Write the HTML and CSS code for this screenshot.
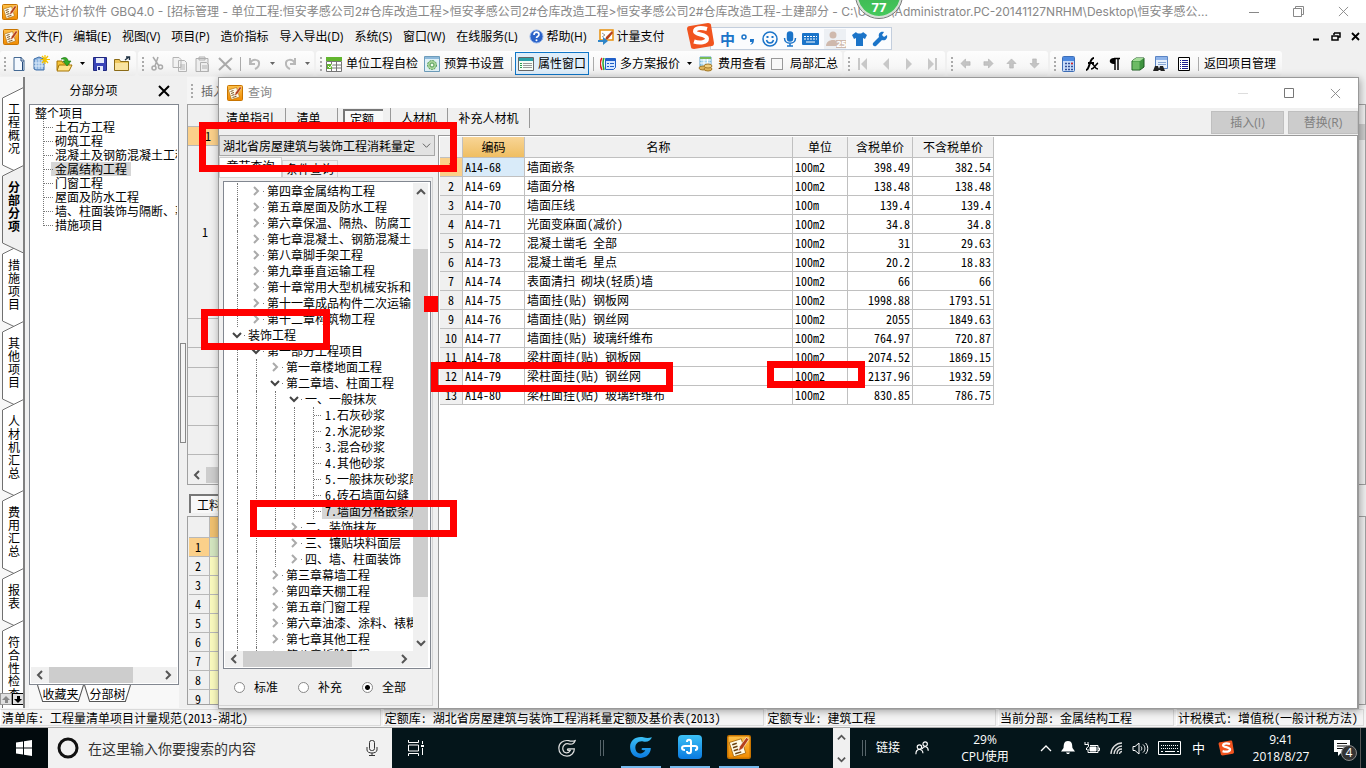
FILE: index.html
```html
<!DOCTYPE html>
<html lang="zh-CN">
<head>
<meta charset="utf-8">
<title>广联达计价软件 GBQ4.0</title>
<link rel="stylesheet" href="styles.css">
</head>
<body>
<svg class="defs" aria-hidden="true">
  <defs>
    <linearGradient id="gold" x1="0" y1="0" x2="0" y2="1"><stop offset="0" stop-color="#ffc24a"/><stop offset="1" stop-color="#f08a00"/></linearGradient>
    <linearGradient id="blueg" x1="0" y1="0" x2="0" y2="1"><stop offset="0" stop-color="#3cc0f5"/><stop offset="1" stop-color="#0a7ae0"/></linearGradient>
  </defs>
  <symbol id="app" viewBox="0 0 16 16"><rect x=".5" y=".5" width="15" height="15" rx="1" fill="url(#gold)" stroke="#c87400"/><path d="M1.500 5l8-2.500L12.500 12l-8 2.500z" fill="#fffbe8" stroke="#a86a10" stroke-width=".6"/><path d="M3.500 6.500l3-1M4 8.500l3-1M4.500 10.500l3-1M5.500 12.500l4-1.200" stroke="#6a4010" stroke-width=".9"/><path d="M13 1.500L8.500 7.500l-1 3.500 3-2L14.500 3z" fill="#b5401c" stroke="#fff" stroke-width=".4"/></symbol>
  <symbol id="right" viewBox="0 0 10 10"><path d="M3 1l4 4-4 4" fill="none" stroke="currentColor" stroke-width="2"/></symbol>
  <symbol id="left" viewBox="0 0 10 10"><path d="M7 1L3 5l4 4" fill="none" stroke="currentColor" stroke-width="2"/></symbol>
  <symbol id="down" viewBox="0 0 10 10"><path d="M1 3l4 4 4-4" fill="none" stroke="currentColor" stroke-width="2"/></symbol>
  <symbol id="up" viewBox="0 0 10 10"><path d="M1 7l4-4 4 4" fill="none" stroke="currentColor" stroke-width="2"/></symbol>
  <symbol id="close" viewBox="0 0 12 12"><path d="M1 1l10 10M11 1L1 11" fill="none" stroke="currentColor"/></symbol>
  <symbol id="arrow" viewBox="0 0 12 12"><path d="M1 6l5-5v3h5v4H6v3z" fill="#c4c4c4" stroke="#aaa" stroke-width=".6"/></symbol>
  <symbol id="caret" viewBox="0 0 5 3"><path d="M0 0h5L2.500 3z" fill="currentColor"/></symbol>
  <symbol id="gicon" viewBox="0 0 22 22"><path d="M21 2c-3 1-5 1-8 0C6 1 1 5 1 11c0 6 4 10 10 10 5 0 9-4 9-9h-7c-2 0-2 2 0 2h2c-2 4-8 4-9-1-1-5 3-8 7-7 4 1 7-1 8-4z"/></symbol>
  <symbol id="sogou" viewBox="0 0 28 28"><path d="M4 4L22 1c2 0 3 1 3 2l3 18c0 2-1 3-2 3L8 27c-2 0-3-1-3-2L1 7c0-2 1-3 3-3z" fill="#f1541f"/><path d="M21 7c-7-2-12-1-12 2.500s12 2.500 12 7c0 4-7 5-13 3" fill="none" stroke="#fff" stroke-width="4"/></symbol>
</svg>

<div class="app">
  <header class="titlebar">
    <svg class="i16"><use href="#app"/></svg>
    <span class="title-text">广联达计价软件 GBQ4.0 - [招标管理 - 单位工程:恒安孝感公司2#仓库改造工程&gt;恒安孝感公司2#仓库改造工程&gt;恒安孝感公司2#仓库改造工程-土建部分 - C:\Users\Administrator.PC-20141127NRHM\Desktop\恒安孝感公...</span>
    <button class="winbtn" aria-label="最小化"><svg width="10" height="10"><path d="M0 5.500h10" stroke="#888"/></svg></button>
    <button class="winbtn" aria-label="还原"><svg width="11" height="11"><path d="M.5 2.500h8v8h-8zM2.500 2V.5h8v8H9" fill="none" stroke="#888"/></svg></button>
    <button class="winbtn" aria-label="关闭"><svg width="11" height="11"><use href="#close"/></svg></button>
  </header>

  <nav class="menubar">
    <svg class="i16"><use href="#app"/></svg>
    <button>文件(F)</button><button>编辑(E)</button><button>视图(V)</button><button>项目(P)</button><button>造价指标</button><button>导入导出(D)</button><button>系统(S)</button><button>窗口(W)</button><button>在线服务(L)</button>
    <button><svg width="15" height="15" viewBox="0 0 15 15"><circle cx="7.500" cy="7.500" r="6.500" fill="#2a62c8" stroke="#8fb0e8"/><path d="M5 6c0-4 5-3.500 5-.5C10 7.500 7.500 7.500 7.500 9" fill="none" stroke="#fff" stroke-width="1.600"/><circle cx="7.500" cy="11.300" r="1" fill="#fff"/></svg>帮助(H)</button>
    <button><svg width="16" height="16" viewBox="0 0 16 16"><path d="M2 1h13v10H2z" fill="#fff" stroke="#e8900c" stroke-width="1.500"/><path d="M4 4l3 2-3 2" fill="none" stroke="#999"/><path d="M14 2L8 8l-1 3 3-1 5-6z" fill="#b5401c"/><path d="M0 11h5V8l5 4-5 4v-3H0z" fill="#2f86c8"/></svg>计量支付</button>
    <span class="mdi"><button aria-label="最小化子窗口"><svg width="9" height="9"><path d="M1 7.500h6" stroke="#000" stroke-width="2"/></svg></button><button aria-label="还原子窗口"><svg width="10" height="9"><path d="M3 1h6v4H7M3 1v2M1 4h6v4H1z" fill="none" stroke="#000" stroke-width="1.500"/></svg></button><button aria-label="关闭子窗口"><svg width="9" height="9" viewBox="0 0 9 9"><path d="M1 1l7 7M8 1L1 8" stroke="#000" stroke-width="1.800"/></svg></button></span>
  </nav>

  <div class="toolbar">
    <div class="group"><i class="grip"></i>
      <button class="slot" aria-label="新建"><svg width="16" height="16"><path d="M3 1.500h7l3 3v10H3z" fill="#f4f9ff" stroke="#456a94"/><path d="M10 1v4h3M11.500 6v8" fill="none" stroke="#24487a"/></svg></button>
      <button class="slot" aria-label="新建项目"><svg width="17" height="17"><path d="M1 4l5-2 5 2v11H3l-2-1z" fill="#8db4df" stroke="#3e6ea8"/><path d="M3 5v9M6 4v10M9 5v9M1 8h10M1 11h10" stroke="#dcebfa"/><path d="M12 0v9M8 4.500h9M9 1l6 7M15 1L9 8" stroke="#f3c200" stroke-width="1.200"/></svg></button>
      <button class="slot" aria-label="打开"><svg width="17" height="16"><path d="M1 5h5l1 2h6v7H1z" fill="#f5c236" stroke="#a67405"/><path d="M3 9h13l-3 6H1z" fill="#ffe48a" stroke="#a67405"/><path d="M5 3c4-3 7-1 7 2h3l-4 5-4-5h2c0-2-2-2-4-2z" fill="#35ad25" stroke="#176d0d" stroke-width=".6"/></svg></button>
      <span class="dd"><svg width="5" height="3"><use href="#caret"/></svg></span>
      <button class="slot" aria-label="保存"><svg width="14" height="14"><path d="M.5.5h13v13H.5z" fill="#3a44b8" stroke="#20287e"/><path d="M3 1h8v5H3zM4 9h6v5H4z" fill="#e6ebfb"/><path d="M5 10h2v3H5z" fill="#20287e"/></svg></button>
      <button class="slot" aria-label="打开目录"><svg width="17" height="16"><path d="M.5 3.500h5l1 2h8v9H.5z" fill="#eec75e" stroke="#8a6a16"/><path d="M1 7h13v7H1z" fill="#f9e3a0"/><path d="M11 4l4-3M12 1h3.500v3" fill="none" stroke="#234" stroke-width="1.400"/></svg></button>
    </div>
    <div class="group dim"><i class="grip"></i>
      <button class="slot" aria-label="剪切"><svg width="14" height="15" fill="none" stroke="#aaa" stroke-width="1.500"><path d="M3 1l6 9M8 1L5 10"/><circle cx="4" cy="12" r="2"/><circle cx="10.500" cy="11" r="2"/></svg></button>
      <button class="slot" aria-label="复制"><svg width="16" height="16" fill="#f2f2f2" stroke="#b4b4b4"><path d="M1 1.500h6l2 2v8H1zM6.500 4.500h6l2 2v9h-8zM8 9h5M8 11h5M8 13h5"/></svg></button>
      <button class="slot" aria-label="粘贴"><svg width="15" height="16" fill="#eee" stroke="#b0b0b0"><path d="M1 2.500h12v13H1zM4 1h6v3H4zM5.500 6.500h6l2 2v7h-8zM7 10h5M7 12h5"/></svg></button>
      <button class="slot" aria-label="删除"><svg width="15" height="14"><path d="M1 1l12 12M14 1L1 13" stroke="#aaa" stroke-width="2"/></svg></button>
      <i class="sep6"></i>
      <button class="slot" aria-label="撤销"><svg width="14" height="13" fill="none" stroke="#b8b8b8" stroke-width="2"><path d="M2 1v6h5M2 7c2-6 10-5 9 0 0 2-2 4-4 5"/></svg></button>
      <span class="dd"><svg width="5" height="3"><use href="#caret"/></svg></span>
      <button class="slot" aria-label="重做"><svg width="14" height="13" fill="none" stroke="#b8b8b8" stroke-width="2"><path d="M12 1v6H7M12 7C10 1 2 2 3 7c0 2 2 4 4 5"/></svg></button>
      <span class="dd"><svg width="5" height="3"><use href="#caret"/></svg></span>
    </div>
    <div class="group wide"><i class="grip"></i>
      <button class="tb"><svg class="i16"><path d="M0 1h16v4H0z" fill="#62b52e"/><path d="M.5 5.500h15v10H.5zM5.500 6v9M10.500 6v9M0 9h16M0 12h16" fill="#fff" stroke="#777"/><path d="M1 8h5v5H1z" fill="#62b52e"/><path d="M2 10l2 2 3-5" fill="none" stroke="#fff"/></svg>单位工程自检</button>
      <button class="tb"><svg class="i16"><path d="M.5.5h15v15H.5z" fill="#dff0f5" stroke="#6d9cbb"/><path d="M1 2h14" stroke="#8db9db" stroke-width="2"/><circle cx="8" cy="9" r="4.500" fill="#a8d49a" stroke="#4f9a55" stroke-dasharray="2 1"/><circle cx="8" cy="9" r="2" fill="#f4fff0" stroke="#4f9a55"/></svg>预算书设置</button>
      <i class="sep8"></i>
      <button class="tb pressed"><svg class="i16"><path d="M.5 1.500h15v13H.5z" fill="#f6fff6" stroke="#666"/><path d="M1 2h14v3H1z" fill="#29a0a8"/><path d="M2 7.500h2M2 9.500h2M2 11.500h2" stroke="#27a04a"/><path d="M5 7.500h9M5 9.500h9M5 11.500h9" stroke="#999"/></svg>属性窗口</button>
      <i class="sep8"></i>
      <button class="tb"><svg class="i16"><path d="M2 2C0 5 0 10 2 14" fill="none" stroke="#e02020" stroke-width="1.500"/><path d="M4 2C2 6 3 10 4 14" fill="none" stroke="#28a428" stroke-width="1.500"/><path d="M5.500 2.500h10v9l-2 2h-8z" fill="#d7e8ff" stroke="#1f5fc8"/><path d="M5 4h10" stroke="#1f5fc8" stroke-width="2"/><path d="M7 7.500h2M10 7.500h4M7 10.500h2M10 10.500h4" stroke="#1f5fc8"/></svg>多方案报价</button>
      <span class="dd"><svg width="5" height="3"><use href="#caret"/></svg></span>
      <button class="tb"><svg class="i16"><path d="M2 1h11v10H2z" fill="#a5d5ee" stroke="#5a9cc4"/><path d="M2 4h11M2 7h11M6 1v10M9.500 1v10" stroke="#fff"/><path d="M2 1h11v2H2z" fill="#77bb55"/><ellipse cx="5" cy="12" rx="4" ry="2" fill="#dfb45a" stroke="#a47a2a"/><ellipse cx="10" cy="13" rx="4" ry="2" fill="#dfb45a" stroke="#a47a2a"/><ellipse cx="10" cy="10" rx="4" ry="2" fill="#f0cf80" stroke="#a47a2a"/></svg>费用查看</button>
      <label class="check"><input type="checkbox">局部汇总</label>
    </div>
    <div class="group"><i class="grip"></i>
      <button class="slot" aria-label="第一条"><svg width="10" height="14" fill="#c8c8c8"><path d="M0 1h2v12H0zM9 1v12L3 7z"/></svg></button>
      <button class="slot" aria-label="上一条"><svg width="8" height="14" fill="#c8c8c8"><path d="M7 1v12L1 7z"/></svg></button>
      <button class="slot" aria-label="下一条"><svg width="8" height="14" fill="#c8c8c8"><path d="M1 1v12l6-6z"/></svg></button>
      <button class="slot" aria-label="最后一条"><svg width="10" height="14" fill="#c8c8c8"><path d="M8 1h2v12H8zM1 1v12l6-6z"/></svg></button>
    </div>
    <div class="group"><i class="grip"></i>
      <button class="slot" aria-label="左移"><svg width="11" height="11"><use href="#arrow"/></svg></button>
      <button class="slot" aria-label="右移"><svg class="r180" width="11" height="11"><use href="#arrow"/></svg></button>
      <button class="slot" aria-label="上移"><svg class="r90" width="11" height="11"><use href="#arrow"/></svg></button>
      <button class="slot" aria-label="下移"><svg class="r270" width="11" height="11"><use href="#arrow"/></svg></button>
    </div>
    <div class="group last"><i class="grip"></i>
      <button class="slot" aria-label="计算器"><svg width="13" height="16"><rect x=".5" y=".5" width="12" height="15" rx="1" fill="#c9dcf8" stroke="#3e6fb8"/><path d="M1 1h11v4H1z" fill="#4e8ae0"/><path d="M3 7.500h8M3 10.500h8M3 13.500h8" stroke="#334f9a" stroke-width="1.500" stroke-dasharray="2 1"/><path d="M9 7.500h2" stroke="#d22" stroke-width="1.500"/></svg></button>
      <button class="slot" aria-label="函数"><svg width="14" height="14" fill="none" stroke="#000"><path d="M1 13c4 0 3-12 8-12M3 6h6" stroke-width="2"/><path d="M7 7c3 0 2 5 6 5M13 6c-2 1-4 6-7 6" stroke-width="1.500"/></svg></button>
      <button class="slot" aria-label="段落"><svg width="12" height="14"><path d="M11 1.500H5M6 1v12M9 1v12" stroke="#000" stroke-width="1.500" fill="none"/><path d="M6 1C-1 0-1 8 6 7z"/></svg></button>
      <button class="slot" aria-label="模型"><svg width="14" height="14"><path d="M1 4l4-3h8v9l-4 3H1z" fill="#3f9440" stroke="#1d5a20"/><path d="M1 4l4-3h8L9 4z" fill="#a5dc9a"/><path d="M1.500 4.500h7v8h-7z" fill="#6dbb65"/></svg></button>
      <button class="slot" aria-label="查找"><svg width="15" height="16"><path d="M2.500.5h12v12h-12z" fill="#e8f1fc" stroke="#5a84c4"/><path d="M3 1h11v3H3z" fill="#8fb4ea"/><path d="M5 6.500h8M5 8.500h8" stroke="#8aa9d6"/><path d="M0 15l2-5h3l1 3 1-3h3l2 5H8l-1-1H6l-1 1z" fill="#222"/></svg></button>
      <button class="slot" aria-label="列表"><svg width="12" height="14"><path d="M.5.500h11v13H.5z" fill="#fff" stroke="#000"/><path d="M2 3.500h1M2 5.500h1M2 7.500h1M2 9.500h1M2 11.500h1M4 3.500h6M4 5.500h6M4 7.500h6M4 9.500h6M4 11.500h6" stroke="#1c1c90"/></svg></button>
      <i class="sep6"></i>
      <button class="back">返回项目管理</button>
    </div>
  </div>

  <main class="workspace">
    <div class="sidetabs">
      <button class="vtab"><svg viewBox="0 0 24 88" preserveAspectRatio="none"><path d="M23.500.5L2.500 11v67l21 10"/></svg><span>工程概况</span></button>
      <button class="vtab on"><svg viewBox="0 0 24 88" preserveAspectRatio="none"><path d="M23.500.5L2.500 11v67l21 10"/></svg><span>分部分项</span></button>
      <button class="vtab"><svg viewBox="0 0 24 88" preserveAspectRatio="none"><path d="M23.500.5L2.500 11v67l21 10"/></svg><span>措施项目</span></button>
      <button class="vtab"><svg viewBox="0 0 24 88" preserveAspectRatio="none"><path d="M23.500.5L2.500 11v67l21 10"/></svg><span>其他项目</span></button>
      <button class="vtab"><svg viewBox="0 0 24 101" preserveAspectRatio="none"><path d="M23.500.5L2.500 11v80l21 10"/></svg><span>人材机汇总</span></button>
      <button class="vtab"><svg viewBox="0 0 24 88" preserveAspectRatio="none"><path d="M23.500.5L2.500 11v67l21 10"/></svg><span>费用汇总</span></button>
      <button class="vtab"><svg viewBox="0 0 24 62" preserveAspectRatio="none"><path d="M23.500.5L2.500 11v41l21 10"/></svg><span>报表</span></button>
      <button class="vtab"><svg viewBox="0 0 24 101" preserveAspectRatio="none"><path d="M23.500.5L2.500 11v80l21 10"/></svg><span>符合性检查</span></button>
      <div class="tabscroll"><button class="off" aria-label="向上"><svg width="9" height="9"><path d="M0 5l4-4 4 4H6v3H3V5z" fill="#888"/></svg></button><button aria-label="向下"><svg width="9" height="9"><path d="M0 4l4 4 4-4H6V1H3v3z"/></svg></button></div>
    </div>

    <aside class="panel">
      <div class="panel-head"><span>分部分项</span><button aria-label="关闭面板"><svg width="12" height="12" viewBox="0 0 12 12"><path d="M1 1l10 10M11 1L1 11" stroke="#000" stroke-width="2"/></svg></button></div>
      <div class="panel-box">
        <ul class="ptree">
          <li class="root">整个项目</li><li><span>土石方工程</span></li><li><span>砌筑工程</span></li><li><span>混凝土及钢筋混凝土工程</span></li><li><span class="sel">金属结构工程</span></li><li><span>门窗工程</span></li><li><span>屋面及防水工程</span></li><li><span>墙、柱面装饰与隔断、幕墙</span></li><li><span>措施项目</span></li>
        </ul>
        <div class="hscroll"><svg width="10" height="10"><use href="#left"/></svg><span class="track"><i class="thumb p-thumb"></i></span><svg width="10" height="10"><use href="#right"/></svg></div>
      </div>
      <div class="ptabs"><button><svg viewBox="0 0 46 16" preserveAspectRatio="none"><path d="M.5 0l5 15.500h35L45.500 0"/></svg>收藏夹</button><button><svg viewBox="0 0 46 16" preserveAspectRatio="none"><path d="M.5 0l5 15.500h35L45.500 0"/></svg>分部树</button></div>
    </aside>

    <div class="splitter"><i></i></div>

    <section class="under">
      <div class="under-tools"><i class="grip"></i>插入</div>
      <div class="grid-a">
        <div class="ga-main">
          <div class="ga-body"><div class="ga h21"></div><div class="ga h19 hot">1</div><div class="ga h173">1</div><div class="ga h29"></div><div class="ga h20"></div><div class="ga h29"></div><div class="ga h29"></div><div class="ga h29"></div></div>
          <div class="ga-scroll"><i class="thumb"></i></div>
        </div>
        <div class="hscroll"><svg width="10" height="10"><use href="#left"/></svg><span class="track"><i class="thumb half"></i></span></div>
      </div>
      <div class="grid-tab"><button>工料机显示</button></div>
      <div class="grid-b">
        <div class="gb head"><b></b><i></i></div><div class="gb hot"><b>1</b><i></i></div><div class="gb"><b>2</b><i></i></div><div class="gb"><b>3</b><i></i></div><div class="gb"><b>4</b><i></i></div><div class="gb"><b>5</b><i></i></div><div class="gb"><b>6</b><i></i></div><div class="gb"><b>7</b><i></i></div><div class="gb"><b>8</b><i></i></div><div class="gb"><b>9</b><i></i></div>
      </div>
    </section>
  </main>

  <footer class="status">
    <span class="s1">清单库: 工程量清单项目计量规范(2013-湖北)</span><span class="s2">定额库: 湖北省房屋建筑与装饰工程消耗量定额及基价表(2013)</span><span class="s3">定额专业: 建筑工程</span><span class="s4">当前分部: 金属结构工程</span><span class="s5">计税模式: 增值税(一般计税方法)</span>
  </footer>

  <div class="taskbar">
    <button class="start" aria-label="开始"><svg width="16" height="16" fill="#fff"><path d="M0 2.500l7-1v6H0zM8 1.300L16 0v7.500H8zM0 8.500h7v6l-7-1zM8 8.500h8V16l-8-1.200z"/></svg></button>
    <label class="search"><svg width="22" height="22"><circle cx="11" cy="11" r="9" fill="none" stroke="#111" stroke-width="3"/></svg><input type="text" placeholder="在这里输入你要搜索的内容" aria-label="搜索"><svg width="12" height="16" fill="none" stroke="#333"><rect x="3.500" y=".5" width="5" height="10" rx="2"/><path d="M1 7v3c0 4 10 4 10 0V7M6 13v2.500M3 15.500h6"/></svg></label>
    <div class="tasks">
      <button class="tk view" aria-label="任务视图"><svg width="18" height="16" fill="none" stroke="#fff"><path d="M1.500 0v2.500h10V0M1.500 5h10v6h-10zM1.500 16v-2.500h10V16M15.500 1v3M15.500 8v7"/><path d="M14 6h3" stroke-width="2"/></svg></button>
      <button class="tk glodon" aria-label="G"><svg width="18" height="18" fill="none" stroke="#ddd" stroke-width="1.500"><use href="#gicon"/></svg></button>
      <i class="bars"></i>
      <button class="tk run" aria-label="广联达"><svg width="24" height="24" fill="url(#blueg)"><use href="#gicon"/></svg></button>
      <button class="tk run" aria-label="加密锁"><svg width="24" height="24"><rect width="24" height="24" rx="4" fill="url(#blueg)"/><path d="M9 7c0-3 4-3 4 0v9c0 3-4 3-4 0M7 15c-4 0-4-4 0-4h10c3 0 3 4 0 4" fill="none" stroke="#fff" stroke-width="2"/></svg></button>
      <button class="tk run" aria-label="计价软件"><svg width="24" height="24"><use href="#app"/></svg></button>
    </div>
    <div class="tk-scroll"><svg width="9" height="9"><use href="#up"/></svg><svg width="9" height="9"><use href="#down"/></svg></div>
    <i class="bars b2"></i><span class="links">链接</span>
    <div class="tray">
      <svg width="15" height="16" viewBox="0 0 17 16" fill="none" stroke="#fff" stroke-width="1.300"><circle cx="5" cy="7" r="2.500"/><circle cx="11.500" cy="3.500" r="2.500"/><path d="M1 15c0-7 8-7 8-1M8 9c2-4 7-3 7 2"/></svg>
      <div class="two cpu"><span>29%</span><span>CPU使用</span></div>
      <button aria-label="显示隐藏的图标"><svg width="12" height="8" fill="none" stroke="#fff" stroke-width="1.300"><path d="M1 7l5-5 5 5"/></svg></button>
      <svg width="14" height="14" fill="#fff"><path d="M7 0c-5 0-4 5-4.500 7L0 10.500h14L11.500 7C11 5 12 0 7 0zM5 11.500h4L8 13H6z"/></svg>
      <svg width="17" height="14" fill="none" stroke="#fff"><path d="M6 4.500h8v7H4V8M14 7h1.500v2.500H14M1 1v2M4 1v2M.5 3.500h4v2l-2 1.500v2"/><path d="M6 6h6v4H6z" fill="#fff"/></svg>
      <svg width="13" height="13" viewBox="0 0 13 13" fill="none" stroke="#ddd"><path d="M1 12C1 6 6 1 12 1M4 12c0-4 4-8 8-8M7 12c0-3 2-5 5-5M9.500 12c0-1 1-2.500 2.500-2.500" stroke-width="1.300"/></svg>
      <svg width="17" height="13" viewBox="0 0 17 13" fill="none" stroke="#fff"><path d="M1 4.500h2L7 1v11L3 8.500H1zM9 4.500c1 1 1 3 0 4M11 2.500c2.500 2 2.500 6 0 8M13.500 1c3 3 3 8 0 11"/></svg>
      <svg width="23" height="14" fill="none" stroke="#fff"><path d="M.5.5h22v13H.5z"/><path d="M3 4.500h18M3 7.500h18" stroke-dasharray="1 1"/><path d="M3 10.500h2M7 10.500h10M19 10.500h2"/></svg>
      <span class="zh">中</span>
      <svg width="16" height="16"><use href="#sogou"/></svg>
      <div class="two clock"><span>9:41</span><span>2018/8/27</span></div>
      <button class="note" aria-label="通知"><svg width="16" height="16"><path d="M0 0h16v12H8l-4 4v-4H0z" fill="#fff"/><path d="M3 3.500h10M3 6h10M3 8.500h6" stroke="#111"/></svg><b>4</b></button>
    </div>
    <i class="peek"></i>
  </div>

  <section class="dialog" role="dialog" aria-label="查询">
    <div class="dlg-title"><svg class="i16"><use href="#app"/></svg><span>查询</span>
      <button aria-label="最小化"><svg width="10" height="10"><path d="M0 5.500h10" stroke="#ddd"/></svg></button>
      <button aria-label="最大化"><svg width="11" height="11"><path d="M.5.5h9v9h-9z" fill="none" stroke="#777"/></svg></button>
      <button aria-label="关闭"><svg width="11" height="11"><use href="#close"/></svg></button>
    </div>
    <div class="dlg-tabs">
      <button class="t1">清单指引</button><button class="t2">清单</button><button class="t3"><span>定额</span></button><button class="t4">人材机</button><button class="t5">补充人材机</button>
      <span class="acts"><button>插入(I)</button><button>替换(R)</button></span>
    </div>
    <div class="dlg-body">
      <div class="query">
        <div class="combo"><select aria-label="定额库"><option>湖北省房屋建筑与装饰工程消耗量定</option></select><svg width="9" height="9" viewBox="0 0 10 10"><path d="M1 3l4 4 4-4" fill="none" stroke="#555"/></svg></div>
        <div class="qtabs"><button class="on">章节查询</button><button>条件查询</button></div>
        <div class="qpane">
          <div class="qbox">
            <div class="qmid">
              <ul class="qtree">
                <li><i></i><s><svg><use href="#right"/></svg></s>第四章金属结构工程</li>
                <li><i></i><s><svg><use href="#right"/></svg></s>第五章屋面及防水工程</li>
                <li><i></i><s><svg><use href="#right"/></svg></s>第六章保温、隔热、防腐工</li>
                <li><i></i><s><svg><use href="#right"/></svg></s>第七章混凝土、钢筋混凝土</li>
                <li><i></i><s><svg><use href="#right"/></svg></s>第八章脚手架工程</li>
                <li><i></i><s><svg><use href="#right"/></svg></s>第九章垂直运输工程</li>
                <li><i></i><s><svg><use href="#right"/></svg></s>第十章常用大型机械安拆和</li>
                <li><i></i><s><svg><use href="#right"/></svg></s>第十一章成品构件二次运输</li>
                <li><i></i><s><svg><use href="#right"/></svg></s>第十二章构筑物工程</li>
                <li><s class="open"><svg><use href="#down"/></svg></s>装饰工程</li>
                <li><i></i><s class="open"><svg><use href="#down"/></svg></s>第一部分工程项目</li>
                <li><i></i><i></i><s><svg><use href="#right"/></svg></s>第一章楼地面工程</li>
                <li><i></i><i></i><s class="open"><svg><use href="#down"/></svg></s>第二章墙、柱面工程</li>
                <li><i></i><i></i><i></i><s class="open"><svg><use href="#down"/></svg></s>一、一般抹灰</li>
                <li><i></i><i></i><i></i><i></i><u></u><span>1.石灰砂浆</span></li>
                <li><i></i><i></i><i></i><i></i><u></u><span>2.水泥砂浆</span></li>
                <li><i></i><i></i><i></i><i></i><u></u><span>3.混合砂浆</span></li>
                <li><i></i><i></i><i></i><i></i><u></u><span>4.其他砂浆</span></li>
                <li><i></i><i></i><i></i><i></i><u></u><span>5.一般抹灰砂浆厚度</span></li>
                <li><i></i><i></i><i></i><i></i><u></u><span>6.砖石墙面勾缝</span></li>
                <li><i></i><i></i><i></i><i></i><u></u><span class="sel">7.墙面分格嵌条及</span></li>
                <li><i></i><i></i><i></i><s><svg><use href="#right"/></svg></s>二、装饰抹灰</li>
                <li><i></i><i></i><i></i><s><svg><use href="#right"/></svg></s>三、镶贴块料面层</li>
                <li><i></i><i></i><i></i><s><svg><use href="#right"/></svg></s>四、墙、柱面装饰</li>
                <li><i></i><i></i><s><svg><use href="#right"/></svg></s>第三章幕墙工程</li>
                <li><i></i><i></i><s><svg><use href="#right"/></svg></s>第四章天棚工程</li>
                <li><i></i><i></i><s><svg><use href="#right"/></svg></s>第五章门窗工程</li>
                <li><i></i><i></i><s><svg><use href="#right"/></svg></s>第六章油漆、涂料、裱糊</li>
                <li><i></i><i></i><s><svg><use href="#right"/></svg></s>第七章其他工程</li>
                <li><i></i><i></i><s><svg><use href="#right"/></svg></s>第八章拆除工程</li>
              </ul>
              <div class="vscroll"><svg width="10" height="10"><use href="#up"/></svg><span class="vtrack"><i class="thumb"></i></span><svg width="10" height="10"><use href="#down"/></svg></div>
            </div>
            <div class="hscroll"><svg width="10" height="10"><use href="#left"/></svg><span class="track"><i class="thumb q-thumb"></i></span><svg width="10" height="10"><use href="#right"/></svg><i class="corner"></i></div>
          </div>
          <div class="radios"><label><input type="radio" name="kind">标准</label><label><input type="radio" name="kind">补充</label><label><input type="radio" name="kind" checked>全部</label></div>
        </div>
      </div>
      <div class="result">
        <table>
          <colgroup><col class="c0"><col class="c1"><col class="c2"><col class="c3"><col class="c4"><col class="c5"></colgroup>
          <thead><tr><th></th><th class="hot">编码</th><th>名称</th><th>单位</th><th>含税单价</th><th>不含税单价</th></tr></thead>
          <tbody>
            <tr class="cur"><th>1</th><td>A14-68</td><td>墙面嵌条</td><td>100m2</td><td>398.49</td><td>382.54</td></tr>
            <tr><th>2</th><td>A14-69</td><td>墙面分格</td><td>100m2</td><td>138.48</td><td>138.48</td></tr>
            <tr><th>3</th><td>A14-70</td><td>墙面压线</td><td>100m</td><td>139.4</td><td>139.4</td></tr>
            <tr><th>4</th><td>A14-71</td><td>光面变麻面(减价)</td><td>100m2</td><td>34.8</td><td>34.8</td></tr>
            <tr><th>5</th><td>A14-72</td><td>混凝土凿毛 全部</td><td>100m2</td><td>31</td><td>29.63</td></tr>
            <tr><th>6</th><td>A14-73</td><td>混凝土凿毛 星点</td><td>100m2</td><td>20.2</td><td>18.83</td></tr>
            <tr><th>7</th><td>A14-74</td><td>表面清扫 砌块(轻质)墙</td><td>100m2</td><td>66</td><td>66</td></tr>
            <tr><th>8</th><td>A14-75</td><td>墙面挂(贴) 钢板网</td><td>100m2</td><td>1998.88</td><td>1793.51</td></tr>
            <tr><th>9</th><td>A14-76</td><td>墙面挂(贴) 钢丝网</td><td>100m2</td><td>2055</td><td>1849.63</td></tr>
            <tr><th>10</th><td>A14-77</td><td>墙面挂(贴) 玻璃纤维布</td><td>100m2</td><td>764.97</td><td>720.87</td></tr>
            <tr><th>11</th><td>A14-78</td><td>梁柱面挂(贴) 钢板网</td><td>100m2</td><td>2074.52</td><td>1869.15</td></tr>
            <tr><th>12</th><td>A14-79</td><td>梁柱面挂(贴) 钢丝网</td><td>100m2</td><td>2137.96</td><td>1932.59</td></tr>
            <tr><th>13</th><td>A14-80</td><td>梁柱面挂(贴) 玻璃纤维布</td><td>100m2</td><td>830.85</td><td>786.75</td></tr>
          </tbody>
        </table>
      </div>
    </div>
  </section>

  <div class="ime">
    <svg class="ime-logo" width="28" height="28"><use href="#sogou"/></svg>
    <div class="ime-bar">
      <b>中</b>
      <svg width="16" height="16"><circle cx="4" cy="6" r="2" fill="none" stroke="#1b74c9" stroke-width="1.500"/><path d="M10 8h4c0 4-1 5-4 6 1-1 2-2 2-3h-2z" fill="#1b74c9"/></svg>
      <svg width="16" height="16" fill="none" stroke="#1b74c9" stroke-width="1.500"><circle cx="8" cy="8" r="7"/><path d="M4.500 9c1 4 6 4 7 0"/><path d="M5.500 5v2M10.500 5v2" stroke-width="2"/></svg>
      <svg width="14" height="16" fill="none" stroke="#1b74c9" stroke-width="1.500"><rect x="4.500" y="1" width="5" height="9" rx="2.500" fill="#1b74c9"/><path d="M1.500 7c0 7 11 7 11 0M7 12v3M4 15h6"/></svg>
      <svg width="17" height="12"><rect width="17" height="12" rx="1" fill="#1b74c9"/><path d="M2 3.500h13M2 6h13" stroke="#fff" stroke-dasharray="2 1"/><path d="M4 9h9" stroke="#fff"/></svg>
      <span class="ime-user"><svg width="18" height="16"><circle cx="7" cy="4" r="3.500" fill="#cfb9ad"/><path d="M0 15c0-8 14-8 14 0z" fill="#cfb9ad"/></svg><em>25</em></span>
      <svg width="15" height="14"><path d="M4 0c1 2 6 2 7 0l4 3-2 4-2-1v8H4V6L2 7 0 3z" fill="#1b74c9"/></svg>
      <svg width="16" height="16"><path d="M15 4l-3 2-2-2 2-3C8 0 6 3 7 6L1 12c-1 2 1 4 3 3l6-6c3 1 6-1 5-5z" fill="#1b74c9"/></svg>
    </div>
  </div>
  <div class="ball">77</div>

  <div class="mark m1"></div><div class="mark m2"></div><div class="mark m3"></div><div class="mark m4"></div><div class="mark m5"></div><div class="mark m6"></div>
</div>
</body>
</html>
```
FILE: styles.css
```css
* { box-sizing: border-box; }
html, body { height: 100%; margin: 0; }
body {
  font: 12px/16px "Open Sans", "Noto Sans CJK SC", sans-serif;
  color: #000;
  background: #f0f0f0;
  overflow: hidden;
}
button { font: inherit; color: inherit; background: none; border: 0; padding: 0; white-space: nowrap; }
ul { list-style: none; margin: 0; padding: 0; }
svg { flex: none; display: block; }
i, em { font-style: normal; }
.defs { position: absolute; width: 0; height: 0; }
.i16 { width: 16px; height: 16px; }
.app { position: relative; height: 100vh; display: flex; flex-direction: column; }

.titlebar { flex: none; height: 23px; background: #fff; display: flex; align-items: center; color: #888; padding-left: 2px; }
.title-text { flex: 1; min-width: 0; margin-left: 5px; white-space: nowrap; overflow: hidden; font-family: Inter, "Noto Sans CJK SC", sans-serif; }
.winbtn { flex: none; width: 45px; height: 21px; display: grid; place-items: center; }

.menubar { flex: none; height: 27px; display: flex; align-items: center; gap: 11px; padding-left: 3px; }
.menubar > .i16 { margin-right: -5px; }
.menubar button { display: flex; align-items: center; gap: 3px; }
.menubar .mdi { margin-left: auto; display: flex; gap: 10px; padding-right: 6px; }

.toolbar { flex: none; height: 27px; display: flex; gap: 2px; padding-top: 1px; }
.group { display: flex; align-items: center; height: 25px; padding: 0 2px 0 3px; background: linear-gradient(#fdfdfd, #f7f7f7 60%, #ececec); border-radius: 3px; }
.group.dim { padding-right: 1px; color: #666; }
.group.wide { padding-right: 4px; }
.group.last { padding-right: 6px; }
.grip { flex: none; width: 4px; height: 14px; background: repeating-linear-gradient(#aaa 0 2px, transparent 2px 4px) 1px 0 / 2px 100% no-repeat; }
.slot { flex: none; width: 23px; height: 24px; display: grid; place-items: center; }
.dd { width: 12px; display: grid; place-items: center; }
.sep6, .sep8 { flex: none; height: 14px; background: linear-gradient(#aaa, #aaa) center / 1px 100% no-repeat; }
.sep6 { width: 6px; }
.sep8 { width: 8px; }
.tb { display: flex; align-items: center; gap: 4px; height: 23px; padding: 0 3px; }
.tb.pressed { background: #dfeefa; box-shadow: inset 0 0 0 1px #0f76c8; }
.check { display: flex; align-items: center; gap: 7px; margin-left: 2px; white-space: nowrap; }
.check input { appearance: none; width: 12px; height: 12px; margin: 0; border: 1px solid #999; background: #f8f8f8; }
.back { padding-left: 3px; }
.r180 { transform: rotate(180deg); }
.r90 { transform: rotate(90deg); }
.r270 { transform: rotate(270deg); }

.workspace { flex: 1; min-height: 0; display: flex; }

.sidetabs, .ptree, .qtree, .under, .status, .ptabs, .dlg-tabs, .query, .result {
  font-family: "Noto Sans Mono CJK SC", "Noto Sans CJK SC", monospace;
}
.sidetabs { position: relative; flex: none; width: 25px; padding-top: 12px; overflow: hidden; background: #f7f7f7; border-right: 2px solid #808080; }
.vtab { position: relative; display: block; width: 23px; padding: 13px 0; line-height: 13px; }
.vtab svg { position: absolute; left: 0; top: -2px; width: 24px; height: calc(100% + 10px); fill: #fff; stroke: #707070; }
.vtab span { position: relative; display: block; width: 12px; margin-left: 8px; white-space: normal; word-break: break-all; }
.vtab.on { font-weight: bold; z-index: 1; }
.vtab.on svg { fill: #f0f0f0; }
.tabscroll { position: absolute; left: 0; bottom: 3px; z-index: 2; display: flex; }
.tabscroll button { width: 12px; height: 12px; border: 1px solid #000; background: #e0e0e0; display: grid; place-items: center; }
.tabscroll .off { border-color: #999; }

.panel { flex: none; width: 154px; padding-left: 4px; display: flex; flex-direction: column; }
.panel-head { height: 27px; display: flex; align-items: center; padding-right: 9px; }
.panel-head span { flex: 1; text-align: center; }
.panel-box { flex: 1; min-height: 0; display: flex; flex-direction: column; background: #fff; border: 1px solid #828790; padding: 1px; }
.ptree { flex: 1; min-height: 0; overflow: hidden; padding-left: 4px; }
.ptree li { position: relative; height: 14px; line-height: 14px; white-space: nowrap; padding-left: 16px; }
.ptree li:not(.root)::before { content: ""; position: absolute; left: 8px; top: -7px; width: 9px; height: 14px; border-left: 1px dotted #777; border-bottom: 1px dotted #777; }
.ptree li.root { padding-left: 0; }
.ptree span { display: inline-block; padding: 0 4px; height: 14px; }
.ptree .sel { background: #d6d6d6; }
.hscroll { flex: none; height: 16px; display: flex; align-items: center; gap: 4px; background: #f0f0f0; padding: 0 4px; color: #555; }
.track { flex: 1; height: 100%; }
.thumb { display: block; height: 100%; background: #cdcdcd; }
.p-thumb { width: 76%; }
.half { width: 50%; }
.ptabs { height: 23px; display: flex; padding-left: 8px; background: #f8f8f8; }
.ptabs button { position: relative; width: 47px; height: 17px; z-index: 0; }
.ptabs svg { position: absolute; inset: 0; width: 100%; height: 100%; z-index: -1; fill: #fff; stroke: #555; }

.splitter { flex: none; width: 8px; display: grid; place-items: center; padding-right: 1px; }
.splitter i { width: 6px; height: 100px; border: 1px solid #888; background: #f4f4f4; }

.under { flex: 1; min-width: 0; display: flex; flex-direction: column; padding-bottom: 3px; }
.under-tools { height: 27px; width: 50%; display: flex; align-items: center; gap: 7px; padding-left: 3px; color: #666; font-family: "Noto Sans CJK SC", sans-serif; background: #f5f5f5; }
.grid-a { flex: 380 1 0; min-height: 0; display: flex; flex-direction: column; border: 1px solid #a0a0a0; background: #f0f0f0; padding-bottom: 1px; }
.ga-main { flex: 1; min-height: 0; display: flex; }
.ga-body { flex: 1; overflow: hidden; }
.ga-scroll { flex: none; width: 16px; padding-top: 19px; }
.ga-scroll .thumb { height: 16px; }
.ga { width: 50%; padding-left: 14px; border-bottom: 1px solid #b8b8b8; display: flex; align-items: center; }
.h21 { height: 22px; }
.h19 { height: 19px; }
.h173 { height: 173px; }
.h29 { height: 29px; }
.h20 { height: 20px; }
.hot { background: #fbd08a; }
.ga.hot { padding-left: 17px; }
.grid-tab { height: 31px; padding: 9px 2px 0; }
.grid-tab button { padding: 0 6px; height: 19px; border: 1px solid #777; border-width: 2px 1px 0 2px; background: #f8f8f8; }
.grid-b { flex: 188 1 0; min-height: 0; overflow: hidden; border: 1px solid #a0a0a0; padding-left: 1px; }
.gb { display: flex; width: 50%; height: 19px; border-bottom: 1px solid #b8b8b8; background: #f0f0f0; }
.gb b { width: 21px; text-align: center; font-weight: normal; line-height: 18px; border-right: 1px solid #b8b8b8; padding-right: 2px; }
.gb i { flex: 1; background: #fafabe; }
.gb.head { height: 21px; }
.gb.head i { background: #efc070; }
.gb.hot b { background: #fbd08a; }
.gb.hot i { background: #d4e6c0; }

.status { flex: none; height: 20px; display: flex; gap: 2px; background: #f4f4f4; border-bottom: 1px solid #aaa; white-space: nowrap; padding: 1px 2px 1px 0; }
.status span { border: 1px solid #dadada; border-left-color: #fff; line-height: 16px; padding-left: 1px; overflow: hidden; min-width: 0; }
.s1 { flex: 382; }
.s2 { flex: 382; }
.s3 { flex: 230; }
.s4 { flex: 175; }
.s5 { flex: 187; }

.taskbar { flex: none; height: 40px; display: flex; align-items: center; background: #04151a; color: #fff; }
.start { width: 48px; height: 40px; display: grid; place-items: center; background: #020a0d; }
.search { flex: none; width: 344px; height: 40px; background: #f1f1f1; display: flex; align-items: center; padding: 0 14px 0 9px; gap: 9px; }
.search input { flex: 1; min-width: 0; border: 0; background: none; font: 14px/20px "Noto Sans CJK SC", sans-serif; padding: 0; }
.search input::placeholder { color: #333; opacity: 1; }
.tasks { flex: 1; display: flex; align-items: center; }
.tk { width: 40px; height: 40px; display: grid; place-items: center; }
.tk.view { width: 48px; }
.tk.glodon { margin-left: 107px; }
.tk.run { border-bottom: 2px solid #76b9ed; margin-right: 9px; }
.bars { flex: none; width: 4px; height: 16px; border: 1px solid #56646a; border-width: 0 1px; margin: 0 17px 0 13px; }
.bars.b2 { margin: 0 10px 0 3px; }
.tk-scroll { width: 17px; height: 40px; background: #f0f0f0; color: #555; display: flex; flex-direction: column; align-items: center; justify-content: space-between; padding: 5px 0 4px; margin-right: 9px; }
.links { width: 39px; }
.tray { display: flex; align-items: center; gap: 9px; }
.two { display: flex; flex-direction: column; align-items: center; line-height: 17px; white-space: nowrap; }
.cpu { width: 92px; }
.zh { font-size: 13px; margin: 0 4px 0 2px; }
.clock { width: 88px; margin: 0 -2px 0 -6px; }
.note { position: relative; width: 28px; padding-left: 2px; }
.note b { position: absolute; left: 9px; top: 5px; width: 16px; height: 16px; border-radius: 8px; background: #333; border: 1px solid #888; line-height: 14px; text-align: center; font-weight: normal; }
.peek { width: 6px; height: 40px; border-left: 1px solid #555; }

.dialog { position: absolute; left: 218px; right: 7px; top: 77px; bottom: 59px; border: 1px solid #999; background: #f0f0f0; box-shadow: 1px 2px 8px rgba(0,0,0,.35); display: flex; flex-direction: column; }
.dlg-title { flex: none; height: 30px; background: #fff; display: flex; align-items: center; color: #888; padding-left: 8px; }
.dlg-title span { flex: 1; margin-left: 5px; }
.dlg-title button { width: 46px; height: 28px; display: grid; place-items: center; }
.dlg-tabs { flex: none; height: 27px; display: flex; align-items: flex-start; }
.dlg-tabs > button { height: 20px; border-right: 1px solid #999; }
.t1 { width: 67px; padding-right: 4px; }
.t2 { width: 52px; padding-right: 6px; }
.dlg-tabs .t3 { width: 53px; padding: 1px 7px 0 5px; }
.t3 span { display: block; height: 19px; border: 1px solid #777; border-width: 2px 0 0 2px; background: #f9f9f9; line-height: 16px; padding-right: 4px; }
.t4 { width: 57px; }
.t5 { width: 82px; }
.acts { margin-left: auto; display: flex; gap: 4px; padding-top: 3px; font-family: "Open Sans", "Noto Sans CJK SC", sans-serif; color: #808080; }
.acts button { width: 73px; height: 23px; background: #ccc; border: 1px solid #bfbfbf; }
.acts button:last-child { width: 70px; }
.dlg-body { flex: 1; min-height: 0; display: flex; }
.query { flex: none; width: 219px; display: flex; flex-direction: column; padding: 0 5px 2px 0; }
.combo { position: relative; height: 21px; margin-right: -2px; }
.combo select { appearance: none; width: 100%; height: 21px; border: 1px solid #a8a8a8; background: #e2e2e2; font: inherit; color: #000; padding: 0 0 0 3px; }
.combo svg { position: absolute; right: 4px; top: 6px; }
.qtabs { flex: none; height: 21px; display: flex; align-items: flex-end; }
.qtabs button { width: 56px; height: 17px; border: 1px solid #d0d0d0; border-bottom: 0; }
.qtabs .on { width: 63px; height: 20px; background: #fff; line-height: 14px; padding-bottom: 4px; }
.qpane { flex: 1; min-height: 0; display: flex; flex-direction: column; border: 1px solid #d4d4d4; border-left: 0; padding: 3px 1px 0 4px; }
.qbox { flex: 1; min-height: 0; display: flex; flex-direction: column; background: #fff; border: 1px solid #828790; padding: 1px 2px 1px 1px; }
.qmid { flex: 1; min-height: 0; display: flex; }
.qtree { flex: 1; min-width: 0; overflow: hidden; padding-left: 12px; }
.qtree li { display: flex; height: 16px; line-height: 16px; white-space: nowrap; }
.qtree i { flex: none; width: 19px; border-left: 1px dotted #777; }
.qtree s { flex: none; width: 16px; margin-left: -5px; text-decoration: none; color: #aaa; display: flex; align-items: center; background: linear-gradient(#777, #777) 12px 8px / 1px 1px no-repeat; }
.qtree s.open { color: #444; }
.qtree s svg { width: 10px; height: 10px; }
.qtree u { flex: none; width: 9px; height: 16px; border-left: 1px dotted #777; background: repeating-linear-gradient(90deg, #777 0 1px, transparent 1px 2px) 0 8px / 100% 1px no-repeat; }
.qtree span { padding-left: 3px; }
.qtree .sel { background: #d6d6d6; }
.vscroll { flex: none; width: 15px; background: #f0f0f0; color: #555; display: flex; flex-direction: column; align-items: center; gap: 3px; padding: 4px 0 3px; }
.vtrack { flex: 1; width: 100%; padding: 49px 0 38px; }
.corner { width: 11px; }
.q-thumb { width: 72%; }
.radios { flex: none; height: 36px; display: flex; align-items: center; padding-left: 11px; gap: 19px; }
.radios label { display: flex; align-items: center; gap: 9px; width: 45px; white-space: nowrap; }
.radios input { appearance: none; flex: none; width: 11px; height: 11px; border: 1px solid #888; border-radius: 50%; background: #fff; margin: 0; }
.radios input:checked { background: radial-gradient(circle, #000 0 2px, #fff 3px); }
.result { flex: 1; min-width: 0; background: #fff; border: 1px solid #999; border-bottom: 0; padding: 1px; }
table { border-collapse: separate; border-spacing: 0; table-layout: fixed; width: 554px; }
.c0 { width: 23px; }
.c1 { width: 62px; }
.c2 { width: 268px; }
.c3 { width: 55px; }
.c4 { width: 65px; }
.c5 { width: 81px; }
th, td { height: 19px; padding: 0 2px; border: 1px solid #c0c0c0; border-width: 0 1px 1px 0; line-height: 18px; white-space: nowrap; }
th { font-weight: normal; background: #f0f0f0; text-align: center; }
thead th { height: 21px; }
thead .hot { background: linear-gradient(#f8d596, #efbe62); }
td:nth-child(n+5) { text-align: right; }
.cur th { background: #fbd08a; }
.cur td:nth-child(2) { background: #d9ebf9; }

.ime { position: absolute; left: 686px; top: 22px; }
.ime-logo { position: absolute; left: 0; top: 0; z-index: 1; }
.ime-bar { margin: 5px 0 0 24px; width: 182px; height: 23px; background: #fbfcfe; border: 1px solid #c3cedd; display: flex; align-items: center; justify-content: space-between; padding: 0 3px 0 9px; }
.ime-bar b { color: #1b74c9; font-size: 15px; }
.ime-user { position: relative; background: #edf0f4; padding: 2px; }
.ime-user em { position: absolute; right: 0; bottom: 1px; font-size: 9px; line-height: 8px; color: #fff; background: #cfb9ad; font-weight: bold; }
.ball { position: absolute; left: 856px; top: -28px; width: 46px; height: 46px; border-radius: 50%; background: linear-gradient(#38a84c, #45c95c); border: 2px solid #d5e0d6; outline: 1px solid #777; color: #fff; font-weight: bold; font-size: 13px; text-align: center; padding-top: 25px; }

.mark { position: absolute; border: 7px solid #f00; }
.m1 { left: 199px; top: 122px; width: 258px; height: 50px; }
.m2 { left: 201px; top: 309px; width: 129px; height: 41px; }
.m3 { left: 250px; top: 500px; width: 207px; height: 37px; }
.m4 { left: 424px; top: 296px; width: 14px; height: 16px; }
.m5 { left: 431px; top: 362px; width: 242px; height: 30px; }
.m6 { left: 767px; top: 361px; width: 98px; height: 27px; }
```
